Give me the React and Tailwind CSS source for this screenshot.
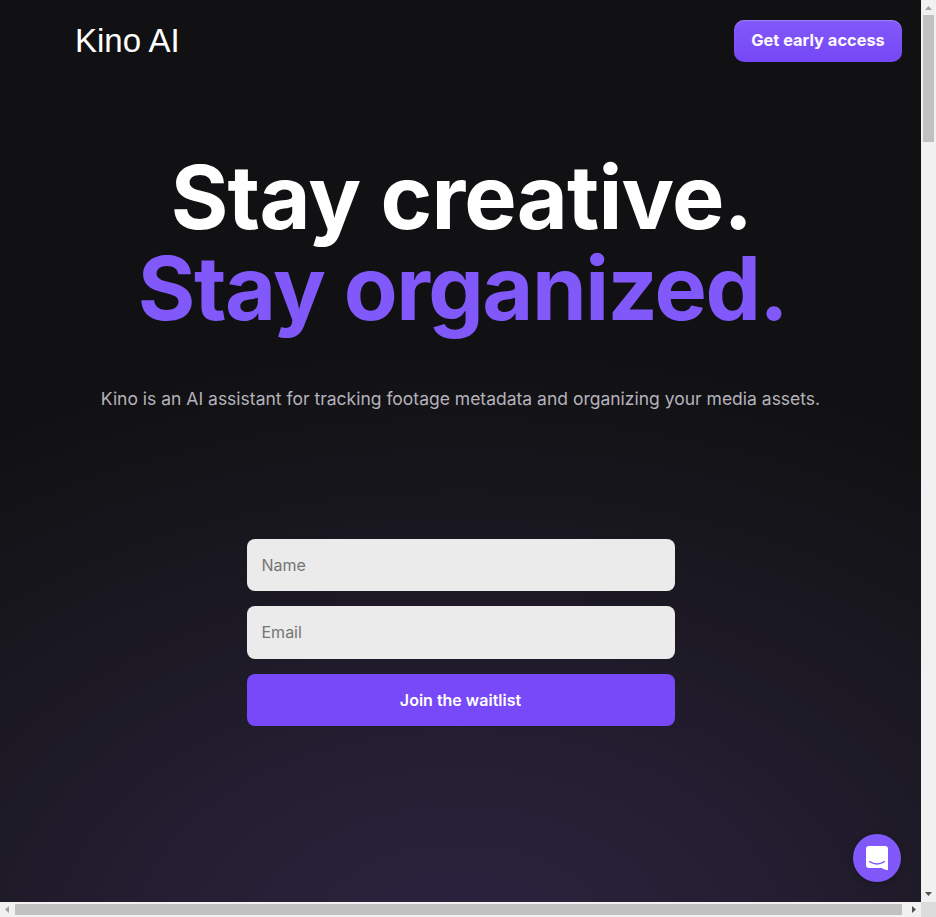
import React from "react";

const fieldClass =
  "block w-full rounded-lg bg-[#ebebeb] px-[15px] text-[16px] text-[#757575] placeholder:text-[#757575] outline-none";

function Header() {
  return (
    <header className="flex h-[82px] items-center justify-between pl-[75px] pr-[19px]">
      <a className="font-['Liberation_Sans',Arial,sans-serif] text-[33px] leading-[40px] whitespace-nowrap text-white">
        Kino AI
      </a>
      <button className="h-[42px] w-[168px] rounded-[10px] bg-linear-to-b from-[#8259fa] to-[#7547f5] pb-[2px] text-[16.4px] font-bold whitespace-nowrap text-[#fdf9ff] shadow-[inset_0_1px_1px_rgba(255,255,255,0.25)]">
        Get early access
      </button>
    </header>
  );
}

function Hero() {
  return (
    <section className="flex flex-col items-center pt-[70px]">
      <h1 className="flex flex-col items-center text-[88px] leading-[91px] font-bold whitespace-nowrap">
        <span className="pl-[2px] tracking-[-0.8px] text-white">Stay creative.</span>
        <span className="pl-[4px] tracking-[-1.55px] text-[#8159fa]">Stay organized.</span>
      </h1>
      <p className="mt-[51px] text-[17.5px] leading-[28px] whitespace-nowrap text-[#b5b2bd]">
        Kino is an AI assistant for tracking footage metadata and organizing your media assets.
      </p>
    </section>
  );
}

function WaitlistForm() {
  return (
    <form className="mx-auto mt-[126px] flex w-[428px] flex-col gap-[15px]">
      <input className={fieldClass + " h-[52px]"} placeholder="Name" />
      <input className={fieldClass + " h-[53px] pb-[2px]"} placeholder="Email" />
      <button
        type="button"
        className="h-[52px] rounded-lg bg-[#7749f8] text-[16px] font-semibold text-white"
      >
        Join the waitlist
      </button>
    </form>
  );
}

function ChatLauncher() {
  return (
    <button className="absolute right-[20px] bottom-[20px] flex size-12 items-center justify-center rounded-full bg-[#8159fa] shadow-[0_1px_6px_rgba(0,0,0,0.25)]">
      <svg width="24" height="26" viewBox="0 0 24 26">
        <path
          d="M4 1H20Q23 1 23 4V25.2Q19.5 25 16.5 23H4Q1 23 1 20V4Q1 1 4 1Z"
          fill="white"
        />
        <path
          d="M4.7 16.7Q12 21.3 19.3 16.7"
          fill="none"
          stroke="#8159fa"
          strokeWidth="1.5"
          strokeLinecap="round"
        />
      </svg>
    </button>
  );
}

function VerticalScrollbar() {
  return (
    <div className="flex w-[15px] flex-col items-center bg-[#f1f1f1]">
      <svg width="15" height="15" className="shrink-0">
        <path d="M4 10L7.5 6L11 10Z" fill="#a3a3a3" />
      </svg>
      <div className="h-[127px] w-[11px] bg-[#c1c1c1]" />
      <svg width="15" height="15" className="mt-auto shrink-0">
        <path d="M4 5L7.5 9L11 5Z" fill="#505050" />
      </svg>
    </div>
  );
}

function HorizontalScrollbar() {
  return (
    <div className="flex h-[15px] bg-[#f1f1f1]">
      <svg width="15" height="15" className="shrink-0">
        <path d="M9 4L5 7.5L9 11Z" fill="#a3a3a3" />
      </svg>
      <div className="mt-[2px] h-[11px] w-[887px] bg-[#c1c1c1]" />
      <svg width="19" height="15" className="shrink-0">
        <path d="M10 4L14 7.5L10 11Z" fill="#505050" />
      </svg>
      <div className="h-[15px] w-[15px] bg-[#dcdcdc]" />
    </div>
  );
}

export default function App() {
  return (
    <div className="flex h-[917px] w-[936px] flex-col overflow-hidden font-['Inter',sans-serif]">
      <div className="flex h-[902px]">
        <main className="relative w-[921px] overflow-hidden bg-[#111113] bg-[radial-gradient(900px_600px_at_50%_950px,#2a2142_0%,#282239_17%,#221d2f_40%,#19171f_70%,#111113_100%)]">
          <Header />
          <Hero />
          <WaitlistForm />
          <ChatLauncher />
        </main>
        <VerticalScrollbar />
      </div>
      <HorizontalScrollbar />
    </div>
  );
}
